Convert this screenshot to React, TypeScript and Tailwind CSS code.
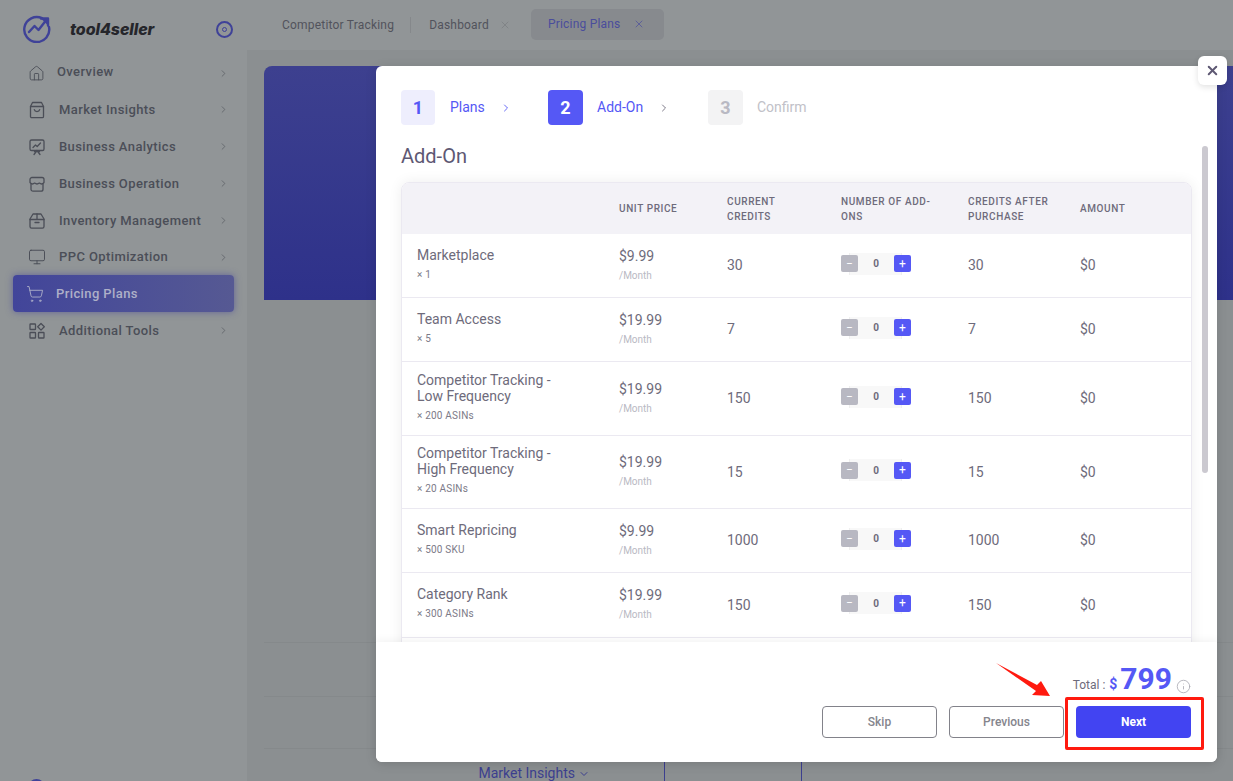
import React from "react";
import { ChevronRight, ChevronDown, House, Monitor, ShoppingCart, X, Info } from "lucide-react";

const Ic = ({ children }: { children: React.ReactNode }) => (
  <svg width="18" height="18" viewBox="0 0 18 18" fill="none" stroke="currentColor" strokeWidth="1.3" strokeLinecap="round" strokeLinejoin="round">
    {children}
  </svg>
);

const BagIcon = () => (
  <Ic>
    <path d="M2.5 5.5 4.5 1.5h9l2 4v10a1.2 1.2 0 0 1-1.2 1.2H3.7a1.2 1.2 0 0 1-1.2-1.2z" />
    <path d="M2.5 5.5h13" />
    <path d="M6.3 8.6c.6 2.6 4.8 2.6 5.4 0" />
  </Ic>
);
const BoardIcon = () => (
  <Ic>
    <rect x="2" y="2" width="14" height="10.5" rx="1.6" />
    <path d="M5 9.5 7.5 7l1.7 1.5L12.5 5" />
    <path d="M6 16.5 9 12.5l3 4M6.5 13.5h5" />
  </Ic>
);
const StoreIcon = () => (
  <Ic>
    <path d="M4 2.5h10a2 2 0 0 1 2 2v3c-1.3 1.6-3.3 1.6-4.6.6-1.3 1-3.5 1-4.8 0C5.3 9.1 3.3 9.1 2 7.5v-3a2 2 0 0 1 2-2z" />
    <path d="M3 9v5.2a2 2 0 0 0 2 2h8a2 2 0 0 0 2-2V9" />
  </Ic>
);
const BoxIcon = () => (
  <Ic>
    <path d="M5 2h8l3 5v7.5a1.6 1.6 0 0 1-1.6 1.6H3.6A1.6 1.6 0 0 1 2 14.500V7z" />
    <path d="M2 7.500h14M9 2v5.500M7 10.500h4" />
  </Ic>
);
const ToolsIcon = () => (
  <Ic>
    <rect x="2" y="2" width="5.500" height="5.500" rx="0.6" />
    <path d="m13 1.500 3.300 3.300L13 8.100 9.700 4.800z" />
    <rect x="2" y="10.500" width="5.500" height="5.500" rx="0.6" />
    <rect x="10.500" y="10.500" width="5.500" height="5.500" rx="0.6" />
  </Ic>
);

const menu: { label: string; icon: React.ReactNode; cls: string; active?: boolean; plain?: boolean }[] = [
  { label: "Overview", icon: <House size={17} strokeWidth={1.3} />, cls: "h-[36px] pl-[14px]" },
  { label: "Market Insights", icon: <BagIcon />, cls: "h-[37px] pl-[15px]" },
  { label: "Business Analytics", icon: <BoardIcon />, cls: "h-[37px] pl-[15px]" },
  { label: "Business Operation", icon: <StoreIcon />, cls: "h-[37px] pl-[15px]" },
  { label: "Inventory Management", icon: <BoxIcon />, cls: "h-[37px] pl-[15px]" },
  { label: "PPC Optimization", icon: <Monitor size={18} strokeWidth={1.3} />, cls: "h-[36px] pl-[15px]" },
  { label: "Pricing Plans", icon: <ShoppingCart size={18} strokeWidth={1.2} />, cls: "h-[37px] pl-[13px]", active: true, plain: true },
  { label: "Additional Tools", icon: <ToolsIcon />, cls: "h-[37px] pl-[15px]" },
];

const rows = [
  { name: ["Marketplace"], sub: "× 1", price: "$9.99", cur: "30", h: "h-[64px]" },
  { name: ["Team Access"], sub: "× 5", price: "$19.99", cur: "7", h: "h-[64px]" },
  { name: ["Competitor Tracking -", "Low Frequency"], sub: "× 200 ASINs", price: "$19.99", cur: "150", h: "h-[74px]" },
  { name: ["Competitor Tracking -", "High Frequency"], sub: "× 20 ASINs", price: "$19.99", cur: "15", h: "h-[73px]" },
  { name: ["Smart Repricing"], sub: "× 500 SKU", price: "$9.99", cur: "1000", h: "h-[64px]" },
  { name: ["Category Rank"], sub: "× 300 ASINs", price: "$19.99", cur: "150", h: "h-[65px]" },
];

const cols = "grid grid-cols-[201px_108px_114px_127px_112px_1fr]";

const Stepper = () => (
  <div className="relative flex items-center w-[70px] h-[22px] -translate-y-[2px]">
    <div className="absolute left-[8px] right-[9px] top-0 bottom-0 bg-[#f8f8f8] border-x border-[#efefef]" />
    <span className="relative z-10 flex items-center justify-center w-[17px] h-[17px] rounded-[2px] bg-[#b8b8c2] text-white text-[12px] leading-none">−</span>
    <span className="relative z-10 flex-1 text-center text-[10px] font-bold text-[#6e6b7b]">0</span>
    <span className="relative z-10 flex items-center justify-center w-[17px] h-[17px] rounded-[2px] bg-[#5558f5] text-white text-[12px] leading-none">+</span>
  </div>
);

export default function App() {
  return (
    <div className="relative flex h-[781px] w-full overflow-hidden bg-[#8b8f91] font-['Roboto',sans-serif]">
      {/* Sidebar */}
      <aside className="flex flex-col w-[247px] shrink-0 bg-[#919597]">
        <div className="flex items-center h-[54px] pl-[23px] pr-[14px] pt-[4px]">
          <svg width="28" height="28" viewBox="0 0 28 28" fill="none" stroke="#3f4298" strokeWidth="2.400" strokeLinecap="round" strokeLinejoin="round">
            <path d="M19 3.200A12.500 12.500 0 1 0 26 12" />
            <path d="M6 17l5.500-6 4 4 7-9" />
            <path d="M18 3.500h7v7" fill="#3f4298" />
          </svg>
          <span className="ml-[19px] text-[16px] font-extrabold italic text-[#25262b] font-['Inter',sans-serif] tracking-[-0.1px]">tool4seller</span>
          <span className="ml-auto flex items-center justify-center w-[17px] h-[17px] rounded-full border-2 border-[#3f4298]">
            <span className="w-[5px] h-[5px] rounded-full border border-[#3f4298]" />
          </span>
        </div>
        <nav className="flex flex-col px-[13px] pt-[1px]">
          {menu.map((m) => (
            <div
              key={m.label}
              className={`flex items-center rounded-[4px] pr-[5px] ${m.cls} ${
                m.active
                  ? "bg-gradient-to-r from-[#42459a] to-[#565993] shadow-[0_0_7px_rgba(63,66,152,0.6)] text-[#aeb0c8]"
                  : "text-[#4b4e57]"
              }`}
            >
              <span className="flex justify-center w-[18px] shrink-0">{m.icon}</span>
              <span className={`${m.plain ? "ml-[12px]" : m.label === "Overview" ? "ml-[12px] -translate-y-[1px]" : "ml-[13px]"} text-[13px] font-medium tracking-[0.4px]`}>{m.label}</span>
              {!m.plain && <ChevronRight size={11} className="ml-auto text-[#55585f]" strokeWidth={1.5} />}
            </div>
          ))}
        </nav>
      </aside>

      {/* Main */}
      <main className="flex flex-col flex-1 min-w-0">
        <header className="flex items-center h-[50px] shrink-0 bg-[#919597] pl-[35px] text-[12px] tracking-[0.2px] text-[#52535c]">
          <span>Competitor Tracking</span>
          <span className="w-px h-[16px] bg-[#85888b] ml-[16px] mr-[18px]" />
          <span>Dashboard</span>
          <X size={12} strokeWidth={1.2} className="ml-[10px] text-[#75787c]" />
          <div className="flex items-center h-[31px] w-[133px] ml-[20px] pl-[17px] rounded-[5px] bg-[#878a8e] text-[#4a4d9c] -translate-y-[1px]">
            <span>Pricing Plans</span>
            <X size={12} strokeWidth={1.4} className="ml-[12px]" />
          </div>
        </header>
        <div className="flex flex-col flex-1 pl-[17px] pt-[16px] min-h-0">
          <div className="h-[234px] shrink-0 rounded-tl-[8px] bg-gradient-to-b from-[#3d408f] to-[#2e318a]" />
          <div className="mt-[342px] flex flex-col">
            <div className="h-[54px] border-t border-[#85898b]" />
            <div className="h-[52px] border-t border-[#85898b]" />
            <div className="flex h-[33px] border-t border-[#85898b]">
              <div className="flex items-center justify-end w-[400px] pr-[74px] pt-[17px] text-[14px] text-[#3c3f8f]">
                Market Insights
                <ChevronDown size={12} className="ml-[3px]" />
              </div>
              <div className="w-[138px] border-x border-[#3c3f8f]" />
            </div>
          </div>
        </div>
      </main>

      {/* Avatar peeking at the bottom of the sidebar */}
      <div className="absolute left-[28px] top-[779px] w-[17px] h-[17px] rounded-full border-2 border-[#3f4298]" />

      {/* Modal */}
      <div className="absolute left-[376px] top-[66px] flex flex-col w-[841px] h-[696px] rounded-[6px] bg-white shadow-[0_2px_12px_rgba(0,0,0,0.12)]">
        <button className="absolute -top-[10px] -right-[10px] z-20 flex items-center justify-center w-[29px] h-[29px] rounded-[6px] bg-white shadow-[0_2px_6px_rgba(0,0,0,0.12)] text-[#5e5873]">
          <X size={15} strokeWidth={3.2} />
        </button>
        <div className="relative flex-1 min-h-0 overflow-hidden px-[25px] pt-[24px]">
          <div className="flex items-center h-[35px] text-[14px]">
            <div className="flex items-center w-[147px]">
              <span className="flex items-center justify-center w-[34px] h-[35px] rounded-[4px] bg-[#eeeefd] text-[#5558f5] text-[18px] font-bold">1</span>
              <span className="ml-[15px] text-[#5558f5]">Plans</span>
              <ChevronRight size={12} strokeWidth={1.8} className="ml-[15px] text-[#5558f5]" />
            </div>
            <div className="flex items-center w-[160px]">
              <span className="flex items-center justify-center w-[35px] h-[35px] rounded-[4px] bg-[#5558f5] text-white text-[18px] font-bold">2</span>
              <span className="ml-[14px] text-[#5558f5]">Add-On</span>
              <ChevronRight size={12} strokeWidth={1.8} className="ml-[15px] text-[#6e6b7b]" />
            </div>
            <div className="flex items-center">
              <span className="flex items-center justify-center w-[35px] h-[35px] rounded-[4px] bg-[#f3f3f4] text-[#b9b9c3] text-[18px] font-bold">3</span>
              <span className="ml-[14px] text-[#c1c1c8]">Confirm</span>
            </div>
          </div>
          <h2 className="mt-[16px] h-[30px] text-[20px] leading-[30px] font-normal text-[#5e5873]">Add-On</h2>
          <div className="mt-[11px] w-[791px] border border-[#ebe9f1] rounded-t-[8px] overflow-hidden shadow-[0_0_14px_rgba(0,0,0,0.07)]">
            <div className={`${cols} h-[51px] items-center bg-[#f3f2f7] text-[10px] leading-[15px] font-medium tracking-[0.6px] text-[#6e6b7b]`}>
              <div />
              <div className="pl-4">UNIT PRICE</div>
              <div className="pl-4">CURRENT<br />CREDITS</div>
              <div className="pl-4">NUMBER OF ADD-<br />ONS</div>
              <div className="pl-4">CREDITS AFTER<br />PURCHASE</div>
              <div className="pl-4">AMOUNT</div>
            </div>
            {rows.map((r) => (
              <div key={r.sub} className={`${cols} ${r.h} items-center border-b border-[#ebe9f1] text-[14px] text-[#6e6b7b]`}>
                <div className="pl-[15px] pb-[3px]">
                  {r.name.map((n) => (
                    <div key={n} className="leading-[16px]">{n}</div>
                  ))}
                  <div className="mt-[5px] text-[10px] leading-[14px] tracking-[0.2px] text-[#7c7a88]">{r.sub}</div>
                </div>
                <div className="pl-4">
                  <div className="leading-[20px]">{r.price}</div>
                  <div className="text-[10px] leading-[20px] text-[#b9b9c3]">/Month</div>
                </div>
                <div className="pl-4">{r.cur}</div>
                <div className="pl-4"><Stepper /></div>
                <div className="pl-4">{r.cur}</div>
                <div className="pl-4">$0</div>
              </div>
            ))}
            <div className="h-[20px]" />
          </div>
          <div className="absolute left-[826px] top-[80px] w-[6px] h-[327px] rounded-full bg-[#cbc9d0]" />
        </div>
        <footer className="relative flex flex-col items-end h-[120px] shrink-0 rounded-b-[6px] bg-white pr-[26px] pt-[22px] shadow-[0_-2px_8px_rgba(0,0,0,0.05)]">
          <div className="flex items-baseline h-[42px] text-[#6e6b7b]">
            <span className="text-[12px]">Total :</span>
            <span className="ml-[4px] text-[14px] font-bold text-[#5558f5]">$</span>
            <span className="ml-[3px] text-[30px] leading-[30px] font-bold text-[#5558f5]">799</span>
            <Info size={15} strokeWidth={1.3} className="ml-[4px] self-center translate-y-[1px] text-[#a9a9b2]" />
          </div>
          <div className="flex gap-[12px]">
            <button className="w-[115px] h-[32px] rounded-[4px] border border-[#82828a] text-[12px] font-medium text-[#85858d]">Skip</button>
            <button className="w-[115px] h-[32px] rounded-[4px] border border-[#82828a] text-[12px] font-medium text-[#85858d]">Previous</button>
            <button className="w-[115px] h-[32px] rounded-[4px] bg-[#4244f2] text-[12px] font-bold text-white">Next</button>
          </div>
        </footer>
      </div>

      {/* Red annotation */}
      <div className="absolute left-[1065px] top-[697px] w-[139px] h-[53px] rounded-[2px] border-[3px] border-[#ff1a0f]" />
      <svg className="absolute left-[990px] top-[660px]" width="66" height="40" viewBox="0 0 66 40">
        <polygon points="6,3 47,25 51,21 60,36 42,35 46,31" fill="#ff1a0f" />
      </svg>
    </div>
  );
}
